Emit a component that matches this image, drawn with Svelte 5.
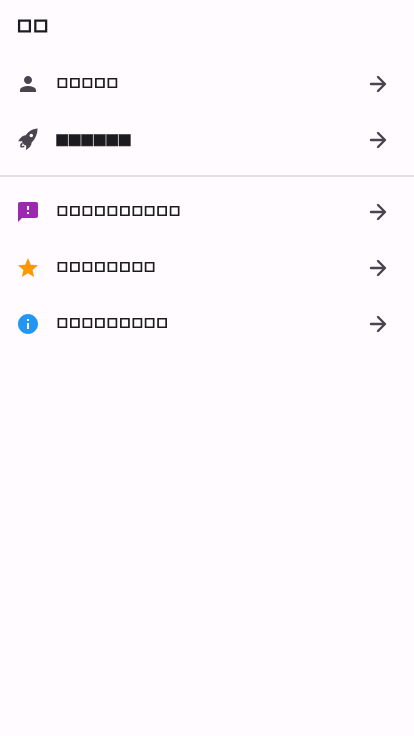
<script>
  const sections = [
    [
      { icon: 'person', label: '□□□□□' },
      { icon: 'rocket', label: '■■■■■■', solid: true }
    ],
    [
      { icon: 'feedback', label: '□□□□□□□□□□' },
      { icon: 'star', label: '□□□□□□□□' },
      { icon: 'info', label: '□□□□□□□□□' }
    ]
  ];
  const shapes = {
    person: 'M12 12c2.21 0 4-1.79 4-4s-1.79-4-4-4-4 1.79-4 4 1.79 4 4 4zm0 2c-2.67 0-8 1.34-8 4v2h16v-2c0-2.66-5.33-4-8-4z',
    rocket: 'M21.6 .6C17.2 .8 12.8 3.1 9.7 7.2C6.6 7.5 4 9.8 2.1 13.5C3.6 13.1 5 13 6.2 13.3L6.3 14.8L8.4 17.1L10 17.3C10.4 18.9 10.2 20.6 9.8 22.2C13.4 20.4 15.5 17.7 15.7 14.6C19.3 11.1 21.5 6.4 21.6 .6ZM15.3 5.8A1.75 1.75 0 1 1 15.3 9.3A1.75 1.75 0 1 1 15.3 5.8ZM6.1 14.8C4.4 15.3 3.7 17.2 4.5 19.4C6.5 19.9 8.2 19.4 8.7 18L7.5 17.6C7.1 18.4 6.4 18.3 5.7 18.1C5.7 17.3 5.9 16.6 6.9 16.2Z',
    feedback: 'M20 2H4c-1.1 0-1.99.9-1.99 2L2 22l4-4h14c1.1 0 2-.9 2-2V4c0-1.1-.9-2-2-2zm-7 12h-2v-2h2v2zm0-4h-2V6h2v4z',
    star: 'M12 17.27L18.18 21l-1.64-7.03L22 9.24l-7.19-.61L12 2 9.19 8.63 2 9.24l5.46 4.73L5.82 21z',
    info: 'M12 2C6.48 2 2 6.48 2 12s4.48 10 10 10 10-4.48 10-10S17.52 2 12 2zm1 15h-2v-6h2v6zm0-8h-2V7h2v2z'
  };
</script>

<main>
  <h1>□□</h1>
  {#each sections as items}
    <section>
      {#each items as item}
        <div class="row">
          <svg class={item.icon} viewBox="0 0 24 24"><path fill-rule="evenodd" d={shapes[item.icon]} /></svg>
          <span class="label" class:solid={item.solid}>{item.label}</span>
          <svg class="arrow" viewBox="0 0 24 24"><path d="M5 12H18.5M12 5L19 12L12 19" /></svg>
        </div>
      {/each}
    </section>
  {/each}
</main>

<style>
  :global(body) { background: #fffbff; }
  main {
    min-height: 736px;
    background: #fffbff;
    color: #1c1b1f;
    font-family: "DejaVu Sans", sans-serif;
  }
  h1 {
    margin: 0;
    height: 56px;
    padding-left: 17.5px;
    box-sizing: border-box;
    font-size: 15px;
    line-height: 51px;
    font-weight: 400;
    letter-spacing: 2.1px;
    -webkit-text-stroke: 1.4px #1c1b1f;
    will-change: opacity;
  }
  section + section { border-top: 2px solid #e4dfe9; margin-top: 7px; padding-top: 7px; }
  .row {
    display: flex;
    align-items: center;
    height: 56px;
    padding: 0 24px 0 16px;
    box-sizing: border-box;
  }
  svg { width: 24px; height: 24px; flex: none; fill: #49454f; }
  .feedback { fill: #9c27b0; }
  .star { fill: #ff9800; }
  .info { fill: #2196f3; }
  .arrow { fill: none; stroke: #49454f; stroke-width: 2.4; stroke-linecap: round; stroke-linejoin: round; }
  .label {
    flex: 1;
    margin-left: 17px;
    padding-bottom: 4px;
    font-size: 11.4px;
    line-height: 20px;
    letter-spacing: 1.72px;
    white-space: nowrap;
    -webkit-text-stroke: 1px #1c1b1f;
    will-change: opacity;
  }
  .solid {
    margin-left: 15px;
    padding-bottom: 2px;
    font-size: 15px;
    letter-spacing: -1.67px;
    -webkit-text-stroke: 0.4px #1c1b1f;
  }
</style>
